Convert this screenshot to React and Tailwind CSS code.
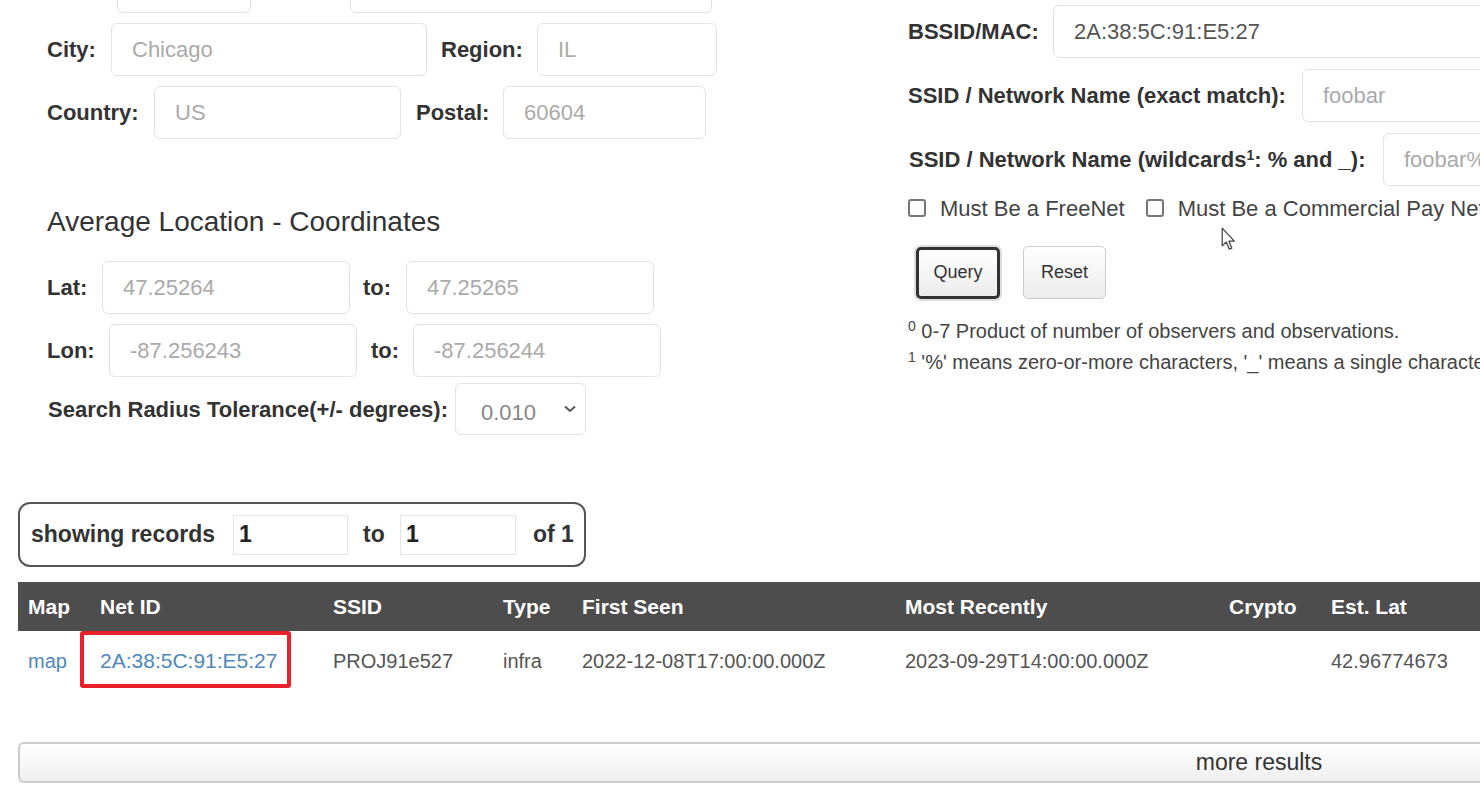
import React from 'react';

const inputCls =
  "h-[53px] rounded-[6px] border border-[#e3e3e3] bg-white px-[20px] text-[22px] text-[#555] placeholder:text-[#aaa] outline-none";

function Field({ label, labelW, ml = 0, inputW, placeholder, value }) {
  return (
    <>
      <span
        className="shrink-0 text-[22px] font-bold text-[#333]"
        style={{ width: labelW, marginLeft: ml }}
      >
        {label}
      </span>
      <input
        className={inputCls + " shrink-0"}
        style={{ width: inputW }}
        placeholder={placeholder}
        defaultValue={value}
      />
    </>
  );
}

function Cursor() {
  return (
    <svg className="absolute left-[1221px] top-[227px]" width="15" height="24" viewBox="0 0 13 21">
      <path
        d="M1 1 L1 16.5 L4.6 13.2 L7.2 19.4 L9.4 18.5 L6.9 12.4 L11.6 12.4 Z"
        fill="#fff"
        stroke="#444"
        strokeWidth="1.1"
        strokeLinejoin="round"
      />
    </svg>
  );
}

export default function App() {
  const headers = ["Map", "Net ID", "SSID", "Type", "First Seen", "Most Recently", "Crypto", "Est. Lat", "Est. Lon", "Channel"];
  const widths = [72, 233, 170, 79, 323, 324, 102, 200, 200, 779];

  return (
    <div className="relative h-[799px] w-[1480px] overflow-hidden bg-white font-['Liberation_Sans',Arial,sans-serif] text-[#333]">
      <div className="w-[2500px]">
        {/* search form */}
        <div className="flex items-start">
          {/* left column: address + coordinates */}
          <div className="w-[908px] shrink-0 pl-[47px]">
            {/* row scrolled mostly out of view */}
            <div className="-mt-[40px] flex items-center">
              <Field label="" labelW={70} inputW={134} placeholder="" />
              <Field label="" labelW={85} ml={14} inputW={362} placeholder="" />
            </div>
            <div className="mt-[10px] flex items-center">
              <Field label="City:" labelW={64} inputW={316} placeholder="Chicago" />
              <Field label="Region:" labelW={96} ml={14} inputW={180} placeholder="IL" />
            </div>
            <div className="mt-[10px] flex items-center">
              <Field label="Country:" labelW={107} inputW={247} placeholder="US" />
              <Field label="Postal:" labelW={87} ml={15} inputW={203} placeholder="60604" />
            </div>

            <h3 className="mt-[67px] text-[28px] leading-[32px] text-[#333]">Average Location - Coordinates</h3>

            <div className="mt-[23px] flex items-center">
              <Field label="Lat:" labelW={55} inputW={248} placeholder="47.25264" />
              <Field label="to:" labelW={43} ml={13} inputW={248} placeholder="47.25265" />
            </div>
            <div className="mt-[10px] flex items-center">
              <Field label="Lon:" labelW={62} inputW={248} placeholder="-87.256243" />
              <Field label="to:" labelW={42} ml={14} inputW={248} placeholder="-87.256244" />
            </div>
            <div className="mt-[6px] flex items-center">
              <span className="w-[408px] shrink-0 pl-px text-[22px] font-bold text-[#333]">
                Search Radius Tolerance(+/- degrees):
              </span>
              <div className="relative h-[52px] w-[131px] rounded-[6px] border border-[#e3e3e3] bg-white">
                <span className="absolute left-[25px] top-[12px] text-[22px] text-[#888]">0.010</span>
                <svg className="absolute right-[8px] top-[20px]" width="14" height="10" viewBox="0 0 14 10">
                  <path d="M2 2.5 L7 7 L12 2.5" fill="none" stroke="#555" strokeWidth="2" />
                </svg>
              </div>
            </div>
          </div>

          {/* right column: network fields */}
          <div className="flex-1">
            <div className="mt-[5px] flex items-center">
              <Field label="BSSID/MAC:" labelW={145} inputW={700} value="2A:38:5C:91:E5:27" />
            </div>
            <div className="mt-[11px] flex items-center">
              <Field label="SSID / Network Name (exact match):" labelW={394} inputW={500} placeholder="foobar" />
            </div>
            <div className="mt-[11px] flex items-center">
              <span className="w-[475px] shrink-0 pl-px text-[22px] font-bold text-[#333]">
                SSID / Network Name (wildcards<sup className="text-[14px]">1</sup>: % and _):
              </span>
              <input className={inputCls + " w-[500px]"} placeholder="foobar%" />
            </div>
            <div className="mt-[10px] flex h-[24px] items-center whitespace-nowrap text-[22px] text-[#444]">
              <span className="h-[18px] w-[18px] shrink-0 rounded-[3px] border-2 border-[#777] bg-white" />
              <span className="ml-[14px]">Must Be a FreeNet</span>
              <span className="ml-[21px] h-[18px] w-[18px] shrink-0 rounded-[3px] border-2 border-[#777] bg-white" />
              <span className="ml-[14px]">Must Be a Commercial Pay Network</span>
            </div>
            <div className="mt-[26px] flex items-center">
              <button className="ml-[8px] h-[52px] w-[84px] rounded-[5px] border-[3px] border-[#333] bg-gradient-to-b from-white to-[#ececec] text-[18px] text-[#333] shadow-[0_0_0_2px_#ddd]">
                Query
              </button>
              <button className="ml-[23px] h-[53px] w-[83px] rounded-[5px] border border-[#ccc] bg-gradient-to-b from-white to-[#ececec] text-[18px] text-[#333]">
                Reset
              </button>
            </div>
            <p className="mt-[20px] whitespace-nowrap text-[20px] leading-[24px] text-[#444]">
              <sup className="text-[14px]">0</sup> 0-7 Product of number of observers and observations.
            </p>
            <p className="mt-[7px] whitespace-nowrap text-[20px] leading-[24px] text-[#444]">
              <sup className="text-[14px]">1</sup> '%' means zero-or-more characters, '_' means a single character.
            </p>
          </div>
        </div>

        {/* paging */}
        <div className="ml-[18px] mt-[67px] flex h-[65px] w-[568px] items-center rounded-[12px] border-2 border-[#555] pl-[11px] text-[23px] font-bold text-[#333]">
          <span className="w-[202px] shrink-0">showing records</span>
          <input className="h-[40px] w-[115px] border border-[#e5e5e5] px-[5px] text-[23px] font-bold text-[#222] outline-none" defaultValue="1" />
          <span className="ml-[15px] w-[37px] shrink-0">to</span>
          <input className="h-[40px] w-[116px] border border-[#e5e5e5] px-[5px] text-[23px] font-bold text-[#222] outline-none" defaultValue="1" />
          <span className="ml-[17px]">of 1</span>
        </div>

        {/* results */}
        <table className="ml-[18px] mt-[15px] w-[2482px] table-fixed border-collapse text-left text-[20px]">
          <colgroup>
            {widths.map((w, i) => (
              <col key={i} style={{ width: w }} />
            ))}
          </colgroup>
          <thead>
            <tr className="h-[49px] bg-[#4d4d4d] text-[21px] text-white">
              {headers.map((h) => (
                <th key={h} className="px-[10px] font-bold">
                  {h}
                </th>
              ))}
            </tr>
          </thead>
          <tbody>
            <tr className="h-[59px] text-[#555]">
              <td className="px-[10px] text-[#4e88ba]">map</td>
              <td className="relative px-[10px] text-[21px] text-[#4e88ba]">
                <span className="absolute -left-[10px] top-0 h-[57px] w-[211px] rounded-[3px] border-4 border-[#e8202a]" />
                2A:38:5C:91:E5:27
              </td>
              <td className="px-[10px]">PROJ91e527</td>
              <td className="px-[10px]">infra</td>
              <td className="px-[10px]">2022-12-08T17:00:00.000Z</td>
              <td className="px-[10px]">2023-09-29T14:00:00.000Z</td>
              <td className="px-[10px]"></td>
              <td className="px-[10px]">42.96774673</td>
              <td className="px-[10px]">-85.66420746</td>
              <td className="px-[10px]">6</td>
            </tr>
          </tbody>
        </table>

        <button className="ml-[18px] mt-[52px] h-[41px] w-[2482px] rounded-[6px] border-2 border-[#ccc] bg-gradient-to-b from-white to-[#efefef] text-[23px] text-[#333]">
          more results
        </button>
      </div>
      <Cursor />
    </div>
  );
}
